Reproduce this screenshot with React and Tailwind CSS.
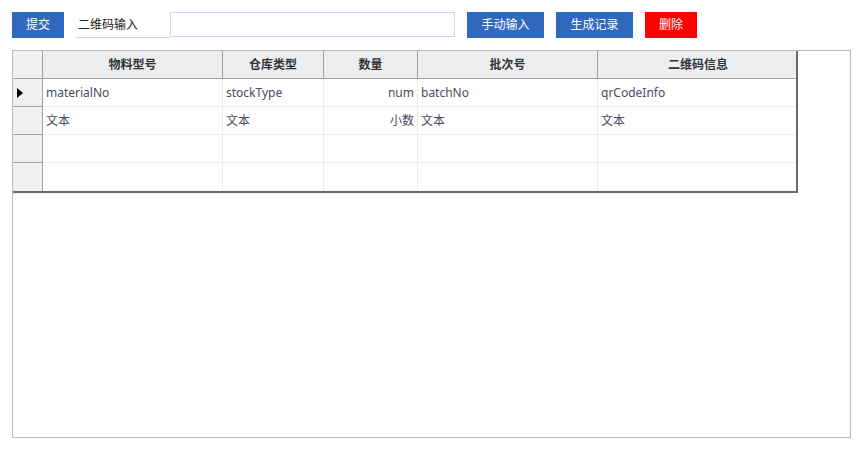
import React from 'react';

const cols = ['物料型号', '仓库类型', '数量', '批次号', '二维码信息'];

const rows = [
  { cells: ['materialNo', 'stockType', 'num', 'batchNo', 'qrCodeInfo'], current: true },
  { cells: ['文本', '文本', '小数', '文本', '文本'] },
  { cells: ['', '', '', '', ''] },
  { cells: ['', '', '', '', ''] },
];

const grid = 'grid grid-cols-[30px_180px_101px_94px_180px_200px]';

function Btn({ children, red, w }) {
  return (
    <button className={`${w} h-[26px] text-[12px] text-white ${red ? 'bg-[#ff0000]' : 'bg-[#3169c1]'}`}>
      {children}
    </button>
  );
}

export default function App() {
  return (
    <div className="w-[863px] h-[450px] bg-white px-3 pt-3 text-[12px] text-[#333]" style={{ fontFamily: '"Noto Sans", "Noto Sans CJK SC", sans-serif' }}>
      {/* toolbar */}
      <div className="flex items-start h-[26px]">
        <Btn w="w-[52px]">提交</Btn>
        <div className="ml-3 w-[94px] h-[26px] border-b border-[#d4d4ec] pl-[2px] leading-[25px] text-[#222]">二维码输入</div>
        <input className="w-[285px] h-[25px] border border-[#d4d4ec] outline-none px-1" />
        <div className="ml-3 flex gap-3">
          <Btn w="w-[77px]">手动输入</Btn>
          <Btn w="w-[77px]">生成记录</Btn>
          <Btn w="w-[52px]" red>删除</Btn>
        </div>
      </div>

      {/* panel */}
      <div className="mt-3 w-[839px] h-[388px] border border-[#b9b9b9]">
        <div className="w-[785px] border-r-2 border-b-2 border-r-[#6a6a6a] border-b-[#6a6a6a]">
          <div className={`${grid} h-[28px] bg-[#ecedef] border-b border-[#a0a0a0]`}>
            <div className="border-r border-[#a0a0a0] bg-[#f0f0f0]" />
            {cols.map((c, i) => (
              <div key={c} className={`flex items-center justify-center font-bold text-[#333] ${i < 4 ? 'border-r border-[#a0a0a0]' : ''}`}>
                {c}
              </div>
            ))}
          </div>
          {rows.map((r, ri) => (
            <div key={ri} className={`${grid} h-[28px] ${ri < 3 ? 'border-b border-[#ececec]' : ''}`}>
              <div className={`flex items-center pl-[4px] bg-[#f0f0f0] border-r border-[#a0a0a0] ${ri < 3 ? 'border-b border-b-[#a0a0a0] -mb-px' : ''}`}>
                {r.current && (
                  <svg width="6" height="10" viewBox="0 0 6 10"><path d="M0 0 L6 5 L0 10 Z" fill="#000" /></svg>
                )}
              </div>
              {r.cells.map((c, i) => (
                <div key={i} className={`flex items-center px-[3px] text-[#4a4a60] ${i === 2 ? 'justify-end' : ''} ${i < 4 ? 'border-r border-[#ececec]' : ''}`}>
                  {c}
                </div>
              ))}
            </div>
          ))}
        </div>
      </div>
    </div>
  );
}
